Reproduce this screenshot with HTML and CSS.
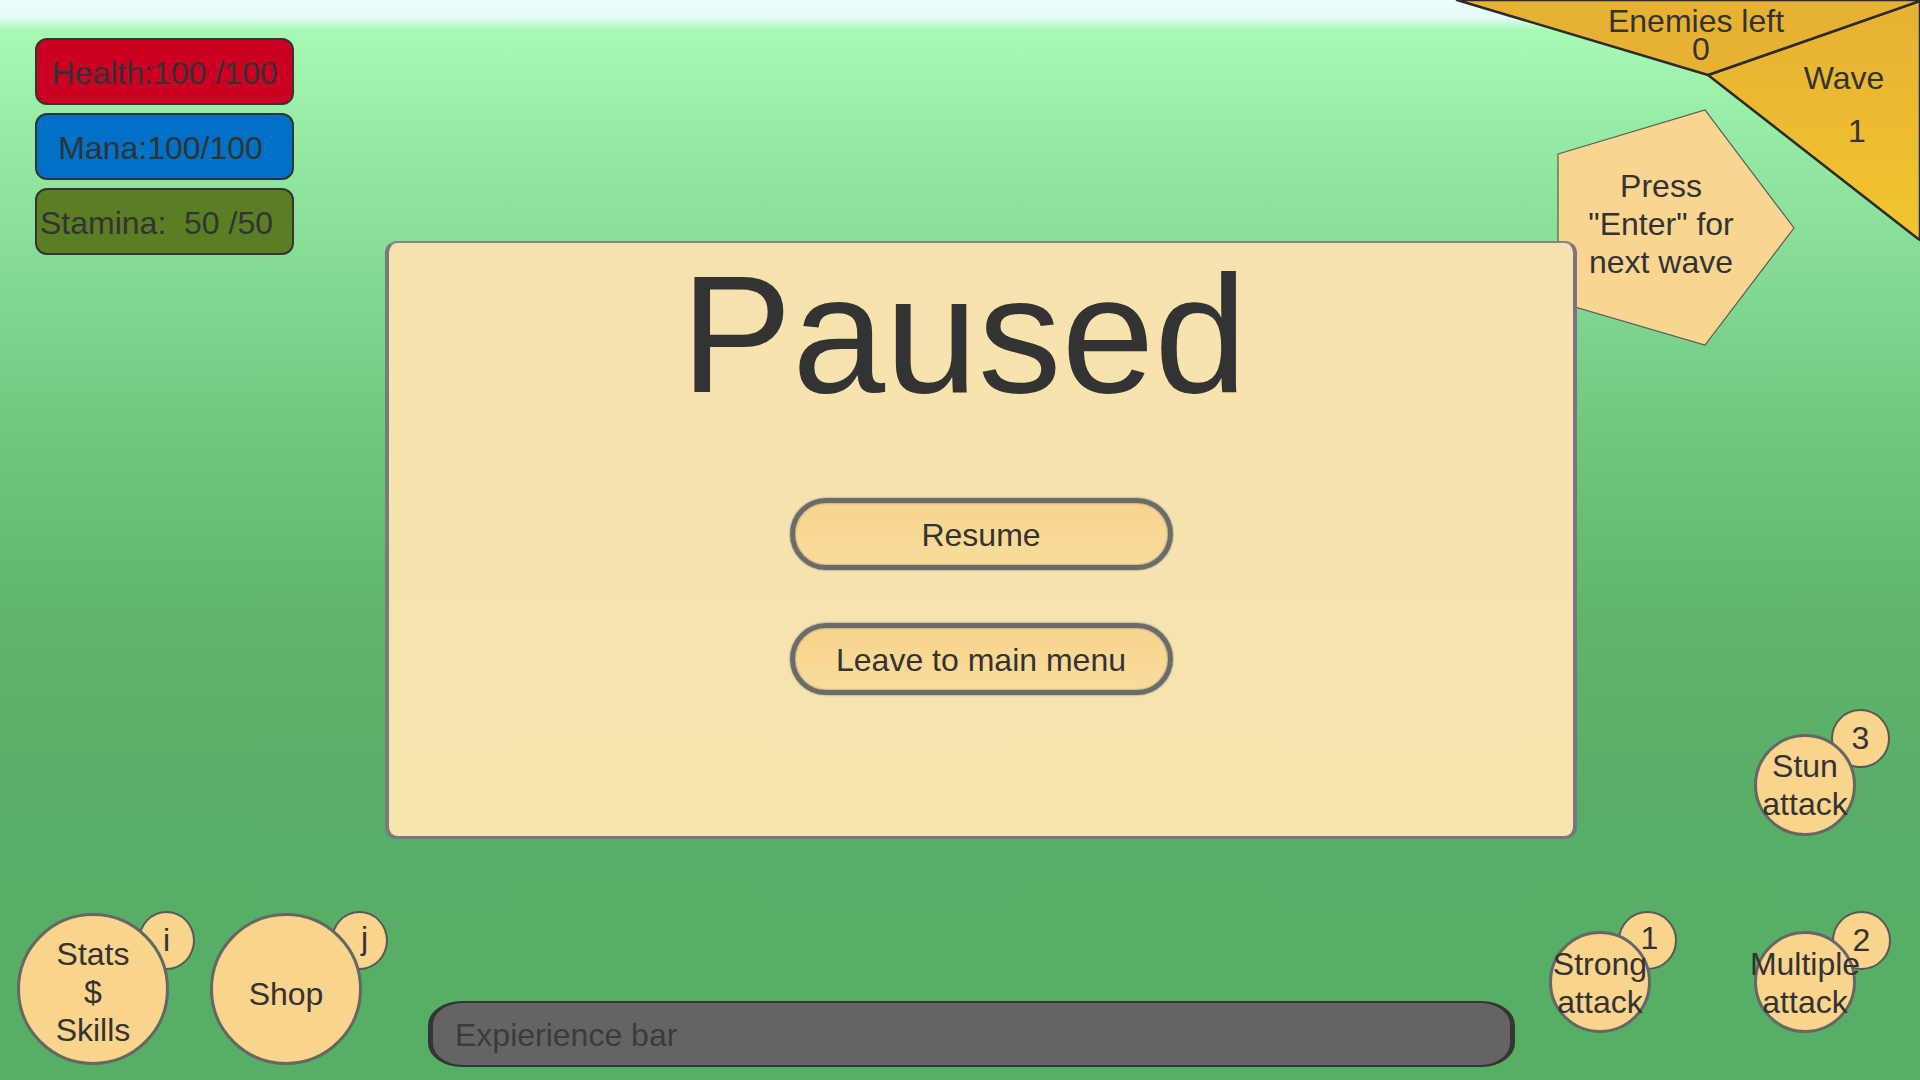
FILE: index.html
```html
<!DOCTYPE html>
<html lang="en">
<head>
<meta charset="utf-8">
<title>Paused</title>
<link rel="stylesheet" href="styles.css">
</head>
<body>
<div class="scene">
  <div class="stats">
    <div class="bar bar-health">Health:100 /100</div>
    <div class="bar bar-mana">Mana:100/100</div>
    <div class="bar bar-stamina">Stamina:&nbsp; 50 /50</div>
  </div>

  <svg class="wave-info" width="480" height="360" viewBox="0 0 480 360" xmlns="http://www.w3.org/2000/svg">
    <defs>
      <linearGradient id="waveFill" x1="0" y1="0" x2="0" y2="1">
        <stop offset="0" stop-color="#e7b133"/>
        <stop offset="1" stop-color="#f1c52f"/>
      </linearGradient>
    </defs>
    <polygon points="268,75 480,1 480,240 477,238" fill="url(#waveFill)" stroke="#2b2b2b" stroke-width="2.5" stroke-linejoin="round"/>
    <polygon points="17,0 480,0 480,1 268,75" fill="#e7b233" stroke="#2b2b2b" stroke-width="2.5" stroke-linejoin="round"/>
    <polygon points="118,154 265,110 354,228 265,345 118,302" fill="#f8d591" stroke="#5a5a5a" stroke-width="1.2"/>
    <g class="hud-text">
      <text x="256" y="32">Enemies left</text>
      <text x="261" y="60">0</text>
      <text x="404" y="89">Wave</text>
      <text x="417" y="142">1</text>
      <text x="221" y="197">Press</text>
      <text x="221" y="235">"Enter" for</text>
      <text x="221" y="273">next wave</text>
    </g>
  </svg>

  <div class="pause-panel">
    <h1 class="pause-title">Paused</h1>
    <div class="pause-actions">
      <button class="pill">Resume</button>
      <button class="pill">Leave to main menu</button>
    </div>
  </div>

  <div class="menu-buttons">
    <div class="orb-wrap">
      <span class="key key-big">i</span>
      <div class="orb orb-big">Stats<br>$<br>Skills</div>
    </div>
    <div class="orb-wrap">
      <span class="key key-big key-j">j</span>
      <div class="orb orb-big orb-shop">Shop</div>
    </div>
  </div>

  <div class="xp-bar">Expierience bar</div>

  <div class="skills">
    <div class="orb-wrap skill-stun">
      <span class="key key-small key-stun">3</span>
      <div class="orb orb-small orb-stun">Stun<br>attack</div>
    </div>
    <div class="orb-wrap skill-strong">
      <span class="key key-small key-strong">1</span>
      <div class="orb orb-small">Strong<br>attack</div>
    </div>
    <div class="orb-wrap skill-multi">
      <span class="key key-small">2</span>
      <div class="orb orb-small">Multiple<br>attack</div>
    </div>
  </div>
</div>
</body>
</html>
```

FILE: styles.css
```css
html, body {
  margin: 0;
  padding: 0;
}

body {
  width: 1920px;
  height: 1080px;
  overflow: hidden;
  font-family: "Liberation Sans", Arial, sans-serif;
  color: #333333;
}

.scene {
  position: relative;
  width: 1920px;
  height: 1080px;
  overflow: hidden;
  background: linear-gradient(to bottom,
    #eefdfd 0px,
    #e6fbf6 18px,
    #a8f9b4 30px,
    #98eda6 120px,
    #86dc95 260px,
    #70c77e 430px,
    #5fb56c 620px,
    #58ae66 800px,
    #57ae65 1080px);
}

/* ---------- stat bars ---------- */
.stats {
  position: absolute;
  left: 35px;
  top: 38px;
  display: flex;
  flex-direction: column;
  gap: 8px;
}

.bar {
  box-sizing: border-box;
  width: 259px;
  height: 67px;
  border: 2.5px solid #343434;
  border-radius: 12px;
  display: flex;
  align-items: center;
  justify-content: center;
  padding-top: 4px;
  font-size: 32px;
  color: #333333;
  white-space: nowrap;
}

.bar-health { background: #cc0023; }
.bar-mana { background: #0071c6; padding-right: 8px; }
.bar-stamina {
  background: #5b7d24;
  justify-content: flex-start;
  padding-left: 3px;
}

/* ---------- wave info ---------- */
.wave-info {
  position: absolute;
  left: 1440px;
  top: 0;
}

.hud-text text {
  font-family: "Liberation Sans", Arial, sans-serif;
  font-size: 32px;
  fill: #333333;
  text-anchor: middle;
}

/* ---------- pause panel ---------- */
.pause-panel {
  position: absolute;
  left: 385px;
  top: 241px;
  box-sizing: border-box;
  width: 1192px;
  height: 598px;
  border-style: solid;
  border-color: #858585 #7a7484 #7a7484 #7a7a7a;
  border-width: 2px 4px 3px 4px;
  border-radius: 12px;
  background: linear-gradient(to bottom, #f6e2ae 0%, #f5e5ad 100%);
  display: flex;
  flex-direction: column;
  align-items: center;
  padding-top: 8px;
}

.pause-title {
  margin: 0;
  padding-right: 34px;
  font-size: 167px;
  line-height: 166px;
  font-weight: normal;
  color: #333333;
}

.pause-actions {
  margin-top: 81px;
  display: flex;
  flex-direction: column;
  gap: 53px;
}

.pill {
  box-sizing: border-box;
  width: 383px;
  height: 72px;
  border: 5px solid #6b6b6b;
  border-radius: 36px;
  background: linear-gradient(to bottom, #f8d48c 0%, #f9dc9b 100%);
  box-shadow: 0 0 2px #6b6b6b, inset 0 0 2px #6b6b6b;
  font-family: "Liberation Sans", Arial, sans-serif;
  font-size: 32px;
  color: #333333;
  padding: 2px 0 0 0;
}

/* ---------- orbs ---------- */
.orb-wrap {
  position: relative;
}

.key {
  position: absolute;
  box-sizing: border-box;
  border: 2px solid #585858;
  border-radius: 50%;
  background: #f8d48c;
  display: flex;
  align-items: center;
  justify-content: center;
  font-size: 32px;
  color: #333333;
}

.key-big {
  width: 57px;
  height: 59px;
  left: 121px;
  top: -2px;
}

.key-j { padding-left: 10px; padding-bottom: 4px; }

.key-small {
  width: 59px;
  height: 59px;
  left: 78px;
  top: -20px;
}

.key-strong { left: 69px; padding-left: 4px; padding-bottom: 4px; }
.key-stun { left: 77px; top: -25px; }

.orb {
  position: relative;
  box-sizing: border-box;
  border: 3px solid #666666;
  border-radius: 50%;
  background: #f8d48c;
  display: flex;
  align-items: center;
  justify-content: center;
  text-align: center;
  font-size: 32px;
  line-height: 38px;
  color: #333333;
  white-space: nowrap;
}

.orb-big {
  width: 152px;
  height: 152px;
  padding-top: 6px;
}

.orb-shop {
  padding-top: 10px;
}

.orb-small {
  width: 102px;
  height: 102px;
  padding-top: 2px;
}

.orb-stun { padding-top: 0; }

.menu-buttons {
  position: absolute;
  left: 17px;
  top: 913px;
  display: flex;
  gap: 41px;
}

/* ---------- experience bar ---------- */
.xp-bar {
  position: absolute;
  left: 428px;
  top: 1001px;
  box-sizing: border-box;
  width: 1087px;
  height: 66px;
  border-style: solid;
  border-color: #353535;
  border-width: 2px 5px;
  border-radius: 34px / 24px;
  background: #646464;
  padding-left: 22px;
  display: flex;
  align-items: center;
  padding-top: 3px;
  font-size: 32px;
  color: #3b3b3b;
}

/* ---------- skills ---------- */
.skills {
  position: absolute;
  left: 1549px;
  top: 734px;
  display: grid;
  grid-template-columns: 102px 102px;
  grid-template-rows: 102px 102px;
  column-gap: 103px;
  row-gap: 95px;
}

.skill-stun { grid-column: 2; grid-row: 1; }
.skill-strong { grid-column: 1; grid-row: 2; }
.skill-multi { grid-column: 2; grid-row: 2; }
```
